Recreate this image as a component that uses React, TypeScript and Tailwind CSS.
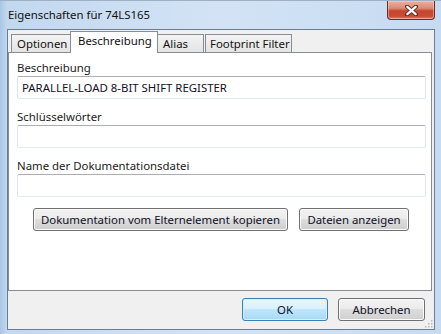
import React from "react";

function Field({ label, value }: { label: string; value?: string }) {
  return (
    <div className="flex flex-col">
      <div className="h-[16px] leading-[16px] text-[#1a1a1a] whitespace-nowrap">{label}</div>
      <div className="h-[23px] w-[409px] bg-white border border-t-[#abadb3] border-x-[#e2e3ea] border-b-[#e3e9ef] rounded-[2px] flex items-center pl-[4px] text-[#101028] leading-[16px] whitespace-nowrap">
        {value}
      </div>
    </div>
  );
}

function Btn({ children, w, def }: { children: React.ReactNode; w: string; def?: boolean }) {
  return (
    <div
      className={
        (def
          ? "border-[#3c7fb1] bg-[linear-gradient(to_bottom,#eaf6fd_0%,#d9f0fc_50%,#bee6fd_50%,#a7d9f5_100%)] shadow-[inset_0_0_0_1px_#d8f0fb] "
          : "border-[#707070] bg-[linear-gradient(to_bottom,#f2f2f2_0%,#ebebeb_50%,#dddddd_50%,#cfcfcf_100%)] shadow-[inset_0_0_0_1px_#fbfbfb] ") +
        w +
        " h-[23px] border rounded-[3px] flex items-center justify-center leading-[16px] text-[#101028] whitespace-nowrap"
      }
    >
      {children}
    </div>
  );
}

export default function App() {
  return (
    <div className="w-[441px] h-[334px] overflow-hidden flex flex-col bg-[linear-gradient(to_right,#a9c6e6_0px,#c2d8ef_7px,#d3e3f5_50%,#c6dbf1_100%)] border-t border-t-[#9fb0c4] font-['Noto_Sans',sans-serif] text-[11.4px]">
      {/* Title bar */}
      <div className="h-[28px] flex items-start justify-between shrink-0">
        <div className="pl-[8px] pt-[6px] leading-[16px] text-[#111] whitespace-nowrap">Eigenschaften für 74LS165</div>
        <div className="mr-[6px] w-[48px] h-[19px] rounded-b-[4px] border border-t-0 border-[#6e2b20] bg-[linear-gradient(to_bottom,#eab0a2_0%,#dc8a75_40%,#c7452e_55%,#c94b33_85%,#de8a72_100%)] shadow-[inset_0_0_0_1px_rgba(255,220,210,0.45)] flex items-center justify-center">
          <svg width="13" height="11" viewBox="0 0 13 11">
            <path d="M2 1.5 L11 9.5 M11 1.5 L2 9.5" stroke="#5a2a22" strokeWidth="4" strokeLinecap="round" />
            <path d="M2.3 1.8 L10.7 9.2 M10.7 1.8 L2.3 9.2" stroke="#ffffff" strokeWidth="2.2" strokeLinecap="round" />
          </svg>
        </div>
      </div>

      {/* Client */}
      <div className="pl-[7px] shrink-0">
        <div className="relative w-[428px] h-[301px] border border-[#6b7d92] bg-[#f0f0f0] flex flex-col">
          {/* Tabs */}
          <div className="h-[22px] flex items-end pl-[3px] shrink-0 leading-[16px] text-[#111] whitespace-nowrap">
            <div className="w-[59px] h-[18px] border-l border-t border-[#898c95] bg-[linear-gradient(to_bottom,#f3f3f3,#e4e4e4)] flex items-center pl-[5px]">
              Optionen
            </div>
            <div className="relative z-10 -mb-px w-[88px] h-[22px] border-l border-t border-r border-[#898c95] bg-white flex items-start pt-[1px] pl-[7px]">
              Beschreibung
            </div>
            <div className="w-[46px] h-[18px] border-t border-r border-[#898c95] bg-[linear-gradient(to_bottom,#f3f3f3,#e4e4e4)] flex items-center pl-[5px]">
              Alias
            </div>
            <div className="ml-[1px] w-[87px] h-[18px] border-l border-t border-r border-[#898c95] bg-[linear-gradient(to_bottom,#f3f3f3,#e4e4e4)] flex items-center pl-[4px]">
              Footprint Filter
            </div>
          </div>

          {/* Panel */}
          <div className="w-[424px] h-[239px] shrink-0 border border-[#898c95] bg-white pt-[7px] pl-[8px] flex flex-col">
            <Field label="Beschreibung" value="PARALLEL-LOAD 8-BIT SHIFT REGISTER" />
            <div className="mt-[10px]">
              <Field label="Schlüsselwörter" />
            </div>
            <div className="mt-[10px]">
              <Field label="Name der Dokumentationsdatei" />
            </div>
            <div className="mt-[11px] pl-[16px] flex gap-[11px]">
              <Btn w="w-[255px]">Dokumentation vom Elternelement kopieren</Btn>
              <Btn w="w-[110px]">Dateien anzeigen</Btn>
            </div>
          </div>

          {/* Footer */}
          <div className="flex-1 flex justify-end items-start pt-[7px] pr-[9px] gap-[10px]">
            <Btn w="w-[86px]" def>
              OK
            </Btn>
            <Btn w="w-[87px]">Abbrechen</Btn>
          </div>

          <svg className="absolute right-[1px] bottom-[1px]" width="9" height="9" viewBox="0 0 9 9">
            {[
              [7, 1],
              [4, 4],
              [7, 4],
              [1, 7],
              [4, 7],
              [7, 7],
            ].map(([x, y], i) => (
              <rect key={i} x={x} y={y} width="1.5" height="1.5" fill="#b8b8b8" />
            ))}
          </svg>
        </div>
      </div>
    </div>
  );
}
